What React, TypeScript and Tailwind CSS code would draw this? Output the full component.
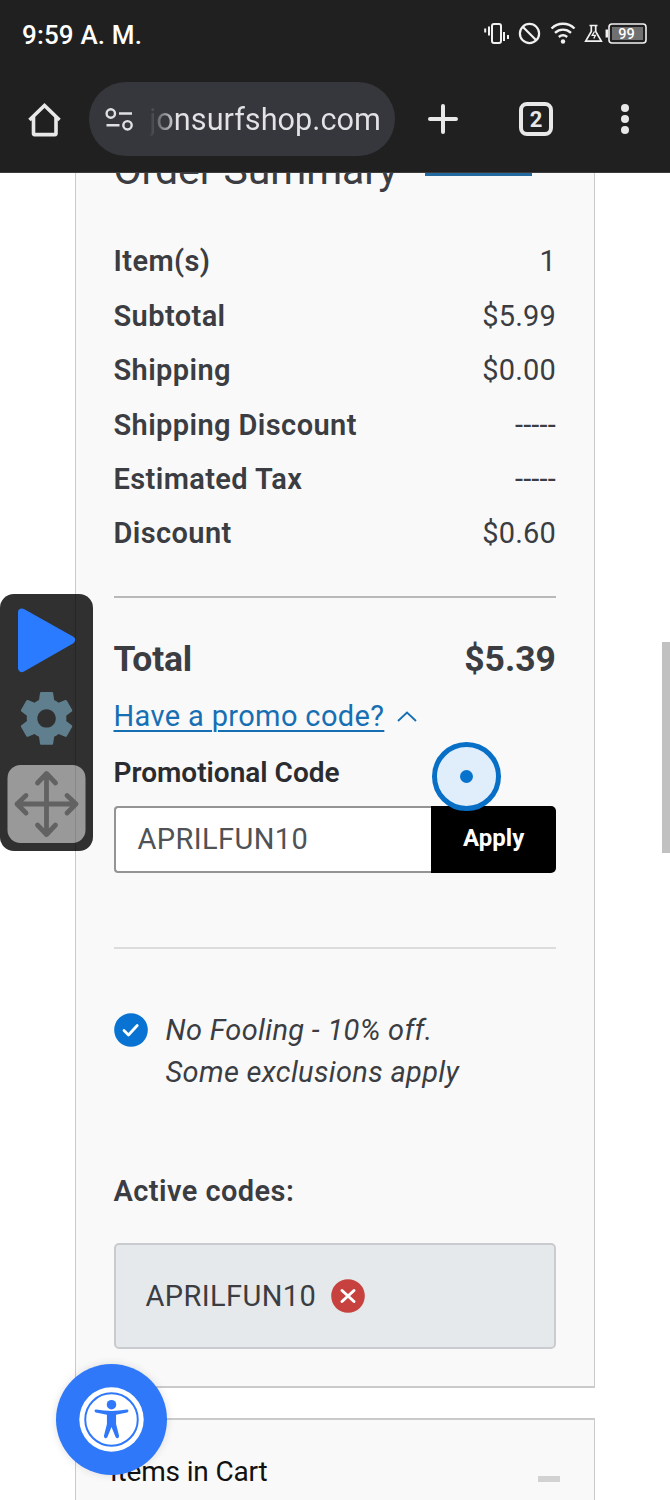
import React from "react";

const summary = [
  ["Item(s)", "1"],
  ["Subtotal", "$5.99"],
  ["Shipping", "$0.00"],
  ["Shipping Discount", "-----"],
  ["Estimated Tax", "-----"],
  ["Discount", "$0.60"],
];

function StatusBar() {
  return (
    <div className="flex h-[68px] items-center justify-between pt-px pl-[22px] pr-[22px] text-white">
      <span className="text-[26px] font-medium leading-[30px] tracking-[0.15px] whitespace-nowrap">9:59 A. M.</span>
      <svg className="-mt-px" width="166" height="28" viewBox="482 20 166 28" fill="none" stroke="#f1f1f1">
        <rect x="492" y="24" width="9" height="19" rx="2" strokeWidth="2" />
        <path d="M489 26.500v9M485.200 28.500v4M504 32v9M508 35v4" strokeWidth="2" />
        <circle cx="529.500" cy="33.500" r="9.600" strokeWidth="2.200" />
        <path d="M523 27l13 13" strokeWidth="2.200" />
        <path d="M551.500 28.500c6.500-6.300 16.500-6.300 23 0M555 32.800c4.700-4.200 11.300-4.200 16 0M558.800 37c2.600-2.200 5.800-2.200 8.400 0" strokeWidth="2.400" />
        <circle cx="563" cy="41.500" r="2.200" fill="#f1f1f1" stroke="none" />
        <path d="M589.500 25.500h8M591.300 26v5.500l-5.600 9.700h15.600l-5.600-9.700v-5.500" strokeWidth="1.700" />
        <path d="M594.500 31.500l-2.300 3.800h3.200l-1.600 3.200" strokeWidth="1.300" />
        <path d="M606.800 29.500v8" strokeWidth="2.500" />
        <rect x="609" y="24" width="37" height="19" rx="3" strokeWidth="1.600" />
        <rect x="612" y="27" width="31" height="13" fill="#707070" stroke="none" />
        <text x="626.500" y="38.600" textAnchor="middle" fontSize="14.500" fontWeight="500" fill="#fff" stroke="none">99</text>
      </svg>
    </div>
  );
}

function Toolbar() {
  return (
    <div className="flex h-[105px] items-start pt-[14px] pl-[26px]">
      <svg className="mt-[19px]" width="38" height="36" viewBox="0 0 38 36" fill="none" stroke="#e8e8e8" strokeWidth="3.600" strokeLinejoin="round">
        <path d="M3.500 19L18.500 4.500l15 14.500" strokeLinejoin="miter" />
        <path d="M7.500 16v16.600q0 1 1 1h20.500q1 0 1-1v-16.600" />
      </svg>
      <div className="ml-[25px] flex h-[74px] w-[306px] items-center rounded-full bg-[#36373c] pl-[16px]">
        <svg width="30" height="26" viewBox="0 0 30 26" fill="none" stroke="#e0e0e2" strokeWidth="2.400">
          <circle cx="5.800" cy="7.500" r="4.200" />
          <path d="M14 7.500h13M1.500 19.300h13" />
          <circle cx="22.500" cy="19.300" r="4.200" />
        </svg>
        <span className="ml-[14px] mt-[2px] text-[30.700px] leading-[40px] whitespace-nowrap bg-linear-to-r from-[#36373c] via-[#e3e3e6] via-12% to-[#e3e3e6] bg-clip-text text-transparent">
          jonsurfshop.com
        </span>
      </div>
      <svg className="ml-[32px] mt-[21px]" width="32" height="32" viewBox="0 0 32 32" stroke="#e8e8e8" strokeWidth="4" strokeLinecap="round">
        <path d="M16 3v26M3 16h26" />
      </svg>
      <div className="ml-[60px] mt-[20px] flex size-[34px] items-center justify-center rounded-[8px] border-[4px] border-[#e8e8e8] pt-px text-[22px] font-bold leading-none text-[#e8e8e8]">
        2
      </div>
      <svg className="ml-[64px] mt-[20px]" width="16" height="34" viewBox="0 0 16 34" fill="#e8e8e8">
        <circle cx="8" cy="6" r="4" />
        <circle cx="8" cy="17" r="4" />
        <circle cx="8" cy="28" r="4" />
      </svg>
    </div>
  );
}

function OrderSummary() {
  return (
    <section className="ml-[75px] h-[1215px] w-[520px] border-x border-b-2 border-[#cacaca] bg-[#f9f9f9] pr-[38px] pl-[37.500px] text-[#3b3d42]">
      <div className="flex h-[62px] items-start">
        <h1 className="-mt-[27px] w-[311.500px] text-[41px] font-normal leading-[48px] tracking-[-0.100px] whitespace-nowrap">Order Summary</h1>
        <div className="h-[3px] w-[107px] bg-[#246a9e]" />
      </div>
      <dl className="text-[29px]">
        {summary.map(([label, value]) => (
          <div key={label} className="flex h-[54.400px] items-center justify-between">
            <dt className="font-semibold tracking-[0.400px]">{label}</dt>
            <dd className="tracking-[0.200px]">{value}</dd>
          </div>
        ))}
      </dl>
      <div className="mt-[35px] border-t-2 border-[#b9b9b9]" />
      <div className="mt-[39px] flex h-[44px] items-center justify-between text-[35.500px] font-bold">
        <span className="tracking-[-0.200px]">Total</span>
        <span>$5.39</span>
      </div>
      <div className="mt-[15px] flex h-[40px] items-center text-[#176fb3]">
        <a className="text-[29px] tracking-[0.360px] underline decoration-2 underline-offset-[4px]">Have a promo code?</a>
        <svg className="ml-[13px]" width="20" height="12" viewBox="0 0 20 12" fill="none" stroke="currentColor" strokeWidth="1.800">
          <path d="M1 11l9-8.500 9 8.500" />
        </svg>
      </div>
      <label className="mt-[17px] flex h-[40px] items-center text-[28px] font-semibold text-[#2b2c30]">Promotional Code</label>
      <div className="relative mt-[13px] flex h-[67px]">
        <div className="flex w-[318.500px] items-center rounded-l-[4px] border-2 border-r-0 border-[#949494] bg-white pl-[22px] text-[29px] tracking-[0.400px] text-[#505256]">APRILFUN10</div>
        <button className="w-[125px] rounded-r-[5px] bg-black pb-[3px] text-[24px] font-bold text-white">Apply</button>
        <div className="absolute left-[318px] -top-[64px] flex size-[69px] items-center justify-center rounded-full border-[5px] border-[#086fc7] bg-[#e0eefb]">
          <div className="size-[13px] rounded-full bg-[#0873cc]" />
        </div>
      </div>
      <div className="mt-[74px] border-t-2 border-[#dcdcdc]" />
      <div className="mt-[60px] flex">
        <svg className="mt-[4px]" width="34" height="34" viewBox="0 0 34 34" fill="none">
          <circle cx="17" cy="17" r="16.800" fill="#0873d2" />
          <path d="M10 17.500l4.500 4.500 8.700-9.500" stroke="white" strokeWidth="2.800" strokeLinecap="round" strokeLinejoin="round" />
        </svg>
        <p className="ml-[18px] text-[29px] italic leading-[42px] tracking-[0.330px]">
          No Fooling - 10% off.<br />Some exclusions apply
        </p>
      </div>
      <h2 className="mt-[77px] h-[42px] text-[29px] font-semibold leading-[42px] tracking-[0.430px]">Active codes:</h2>
      <div className="mt-[31px] flex h-[106px] items-center rounded-[5px] border-2 border-[#c9cbce] bg-[#e5e9ec] pl-[30px] text-[29px]">
        <span className="tracking-[0.400px]">APRILFUN10</span>
        <svg className="ml-[15px]" width="34" height="34" viewBox="0 0 34 34">
          <circle cx="17" cy="17" r="16.800" fill="#c7413f" />
          <path d="M11 11.500l12 11M23 11.500l-12 11" stroke="white" strokeWidth="3" strokeLinecap="round" />
        </svg>
      </div>
    </section>
  );
}

function ItemsCard() {
  return (
    <section className="mt-[30px] ml-[75px] flex h-[110px] w-[520px] items-start justify-between border-x border-t-2 border-[#cacaca] bg-[#f9f9f9] pt-[32px] pr-[34px] pl-[34px] text-[28px] leading-[40px] tracking-[-0.150px] text-[#111]">
      <span>Items in Cart</span>
      <span className="mt-[24px] h-[6px] w-[22px] bg-[#d2d2d2]" />
    </section>
  );
}

function FloatingControls() {
  return (
    <aside className="absolute top-[594px] left-0 h-[257px] w-[93px] rounded-[14px] bg-[#303030]">
      <div className="absolute left-[75px] h-full w-px bg-[#252525]" />
      <svg className="relative" width="93" height="257" viewBox="0 0 93 257" fill="none">
        <path d="M22 18.500L71 46 22 74Z" fill="#2a7bff" stroke="#2a7bff" strokeWidth="8" strokeLinejoin="round" />
        <g transform="translate(14.900 92.700) scale(2.640)">
          <path fill="#5f7f8e" d="M19.430 12.980c.04-.32.07-.64.07-.98s-.03-.66-.07-.98l2.110-1.650c.19-.15.24-.42.12-.64l-2-3.460c-.12-.22-.39-.3-.61-.22l-2.490 1c-.52-.4-1.080-.73-1.690-.98l-.38-2.650C14.460 2.180 14.250 2 14 2h-4c-.25 0-.46.18-.49.42l-.38 2.650c-.61.25-1.170.59-1.690.98l-2.490-1c-.23-.09-.49 0-.61.22l-2 3.460c-.13.22-.07.49.12.64l2.110 1.650c-.04.32-.07.65-.07.98s.03.66.07.98l-2.110 1.650c-.19.15-.24.42-.12.64l2 3.460c.12.22.39.3.61.22l2.490-1c.52.4 1.080.73 1.690.98l.38 2.650c.03.24.24.42.49.42h4c.25 0 .46-.18.49-.42l.38-2.650c.61-.25 1.170-.59 1.690-.98l2.490 1c.23.09.49 0 .61-.22l2-3.460c.12-.22.07-.49-.12-.64l-2.110-1.650ZM12 15.500c-1.930 0-3.500-1.570-3.500-3.500s1.570-3.500 3.500-3.500 3.500 1.570 3.500 3.500-1.570 3.500-3.500 3.500Z" />
        </g>
        <rect x="7.500" y="171" width="78" height="78" rx="13" fill="#999" />
        <path d="M75.500 172v76" stroke="#898989" />
        <path d="M46.500 181v58M17 210h59M37.500 189l9-9.500 9 9.500M37.500 231l9 9.500 9-9.500M26 201.500l-9 8.500 9 9M67 201.500l9 8.500-9 9" stroke="#626262" strokeWidth="4.800" strokeLinecap="round" strokeLinejoin="round" />
      </svg>
    </aside>
  );
}

function AccessibilityButton() {
  return (
    <button aria-label="Accessibility" className="absolute top-[1364px] left-[56px] size-[111px] rounded-full bg-[#2f78fa] shadow-[0_0_8px_rgba(0,0,0,0.12)]">
      <svg width="111" height="111" viewBox="0 0 112 112" fill="none">
        <circle cx="56" cy="56" r="32.500" fill="white" />
        <circle cx="56" cy="56" r="26.500" stroke="#2f78fa" strokeWidth="2" />
        <circle cx="56" cy="41" r="4.800" fill="#2f78fa" />
        <path d="M40.500 46q-2-.300-1.500 1.700.2.900 1.200 1.200l11.200 2.400v9.200l-3 12q-.3 2 1.300 2.300 1.700.4 2.300-1.300l4-10 4 10q.6 1.700 2.300 1.300 1.600-.300 1.300-2.300l-3-12v-9.200l11.200-2.400q1-.300 1.200-1.200.5-2-1.500-1.700-15.500 2.800-31 0Z" fill="#2f78fa" />
      </svg>
    </button>
  );
}

export default function App() {
  return (
    <main className="relative h-[1500px] w-[670px] overflow-hidden bg-white font-[Roboto,sans-serif]">
      <header className="relative z-10 h-[173px] border-b border-[#3c3c3c] bg-[#202020]">
        <StatusBar />
        <Toolbar />
      </header>
      <div className="h-[1327px] overflow-hidden">
        <OrderSummary />
        <ItemsCard />
      </div>
      <div className="absolute top-[642px] right-0 h-[211px] w-[8px] bg-[#c1c1c1]" />
      <FloatingControls />
      <AccessibilityButton />
    </main>
  );
}
